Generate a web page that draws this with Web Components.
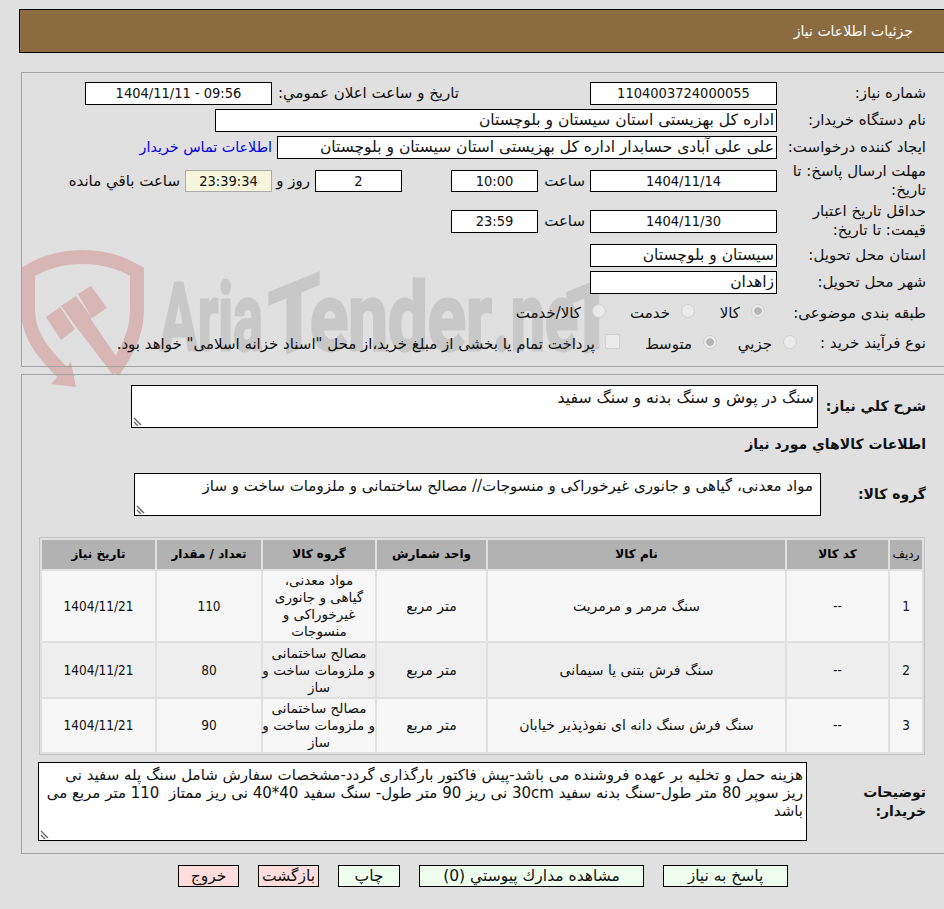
<!DOCTYPE html>
<html lang="fa" dir="rtl">
<head>
<meta charset="utf-8">
<title>جزئيات اطلاعات نياز</title>
<style>
  html{ background: #e0e0e0; }
  body{
    margin: 0;
    padding: 0;
    width: 944px;
    height: 909px;
    overflow: hidden;
    position: relative;
    font: 15px/18px "DejaVu Sans", sans-serif;
    color: #111;
  }
</style>
</head>
<body>

<water-mark></water-mark>

<page-header>جزئيات اطلاعات نياز</page-header>

<form-panel style="margin-top:19px;padding-top:9px;padding-bottom:11px;">
  <form-row>
    <field-label style="width:149px">شماره نیاز:</field-label>
    <field-box center style="width:187px">1104003724000055</field-box>
    <field-label style="width:187px;padding-right:131px">تاریخ و ساعت اعلان عمومي:</field-label>
    <field-box center style="width:187px;direction:ltr">1404/11/11 - 09:56</field-box>
  </form-row>
  <form-row>
    <field-label style="width:149px">نام دستگاه خریدار:</field-label>
    <field-box style="width:562px">اداره کل بهزیستی استان سیستان و بلوچستان</field-box>
  </form-row>
  <form-row>
    <field-label style="width:149px">ایجاد کننده درخواست:</field-label>
    <field-box style="width:500px">علی علی آبادی حسابدار اداره کل بهزیستی استان سیستان و بلوچستان</field-box>
    <field-label link style="padding-right:5px">اطلاعات تماس خریدار</field-label>
  </form-row>
  <form-row style="height:36px">
    <field-label style="width:144px;padding-left:5px">مهلت ارسال پاسخ: تا تاریخ:</field-label>
    <field-box center style="width:187px;height:22px">1404/11/14</field-box>
    <field-label style="width:47px;padding-right:5px">ساعت</field-label>
    <field-box center style="width:87px;height:22px">10:00</field-box>
    <field-box center style="width:87px;height:22px;margin-right:49px">2</field-box>
    <field-label style="width:38px;padding-right:5px">روز و</field-label>
    <field-box center timer style="width:87px;height:22px">23:39:34</field-box>
    <field-label style="padding-right:5px">ساعت باقي مانده</field-label>
  </form-row>
  <form-row style="height:36px">
    <field-label style="width:144px;padding-left:5px">حداقل تاریخ اعتبار قیمت: تا تاریخ:</field-label>
    <field-box center style="width:187px">1404/11/30</field-box>
    <field-label style="width:47px;padding-right:5px">ساعت</field-label>
    <field-box center style="width:87px">23:59</field-box>
  </form-row>
  <form-row style="margin-top:1px">
    <field-label style="width:149px">استان محل تحویل:</field-label>
    <field-box style="width:187px">سیستان و بلوچستان</field-box>
  </form-row>
  <form-row>
    <field-label style="width:149px">شهر محل تحویل:</field-label>
    <field-box style="width:187px">زاهدان</field-box>
  </form-row>
  <form-row style="height:30px">
    <field-label style="width:161px">طبقه بندی موضوعی:</field-label>
    <radio-opt checked style="width:70px">کالا</radio-opt>
    <radio-opt style="width:89px">خدمت</radio-opt>
    <radio-opt>کالا/خدمت</radio-opt>
  </form-row>
  <form-row style="height:22px">
    <field-label style="width:129px">نوع فرآیند خرید :</field-label>
    <radio-opt style="width:80px">جزيي</radio-opt>
    <radio-opt checked style="width:97px">متوسط</radio-opt>
    <radio-opt square>پرداخت تمام یا بخشی از مبلغ خرید،از محل "اسناد خزانه اسلامی" خواهد بود.</radio-opt>
  </form-row>
</form-panel>

<form-panel style="margin-top:7px;padding-top:10px;padding-bottom:12px;">
  <form-row style="height:43px">
    <field-label bold style="width:108px">شرح كلي نياز:</field-label>
    <note-box style="width:687px;height:43px;font-size:15.7px">سنگ در پوش و سنگ بدنه و سنگ سفید</note-box>
  </form-row>
  <form-row style="height:22px;margin-top:1px;margin-bottom:13px">
    <field-label bold>اطلاعات كالاهاي مورد نياز</field-label>
  </form-row>
  <form-row style="height:43px">
    <field-label bold style="width:105px">گروه كالا:</field-label>
    <note-box style="width:687px;height:43px;padding-right:7px">مواد معدنی، گیاهی و جانوری غیرخوراکی و منسوجات// مصالح ساختمانی و ملزومات ساخت و ساز</note-box>
  </form-row>
  <items-table style="margin-top:17px"></items-table>
  <form-row style="height:79px;margin-top:3px">
    <field-label bold style="width:99px;padding-left:20px">توضیحات خریدار:</field-label>
    <note-box style="width:769px;height:79px;padding-left:6px">هزینه حمل و تخلیه بر عهده فروشنده می باشد-پیش فاکتور بارگذاری گردد-مشخصات سفارش شامل سنگ پله سفید نی ریز سوپر 80 متر طول-سنگ بدنه سفید 30cm نی ریز 90 متر طول- سنگ سفید 40*40 نی ریز ممتاز  110 متر مربع می باشد</note-box>
  </form-row>
</form-panel>

<button-bar>
  <action-button style="width:125px">پاسخ به نیاز</action-button>
  <action-button style="width:225px">مشاهده مدارك پیوستي (0)</action-button>
  <action-button style="width:62px">چاپ</action-button>
  <action-button pink style="width:61px">بازگشت</action-button>
  <action-button pink style="width:61px">خروج</action-button>
</button-bar>

<script>
const waterMarkTemplate = document.createElement('template');
waterMarkTemplate.innerHTML = `
  <style>
    :host{
      position: absolute;
      left: 0;
      top: 0;
      z-index: -1;
      display: block;
      direction: ltr;
    }
    svg{ display: block; }
    text{
      font-family: Roboto, sans-serif;
      font-weight: 700;
      font-size: 94px;
      fill: #c8c8c8;
      stroke: #c8c8c8;
      stroke-width: 3px;
    }
  </style>
  <svg width="944" height="909" viewBox="0 0 944 909">
    <g fill="#d9b6b6">
      <path d="M70 380C50 360 28 340 28 310V272C60 252 105 252 137 272V310C137 335 125 355 113 372" fill="none" stroke="#d9b6b6" stroke-width="14"/>
      <polygon points="71,362 76,387 51,384"/>
      <polygon points="46,317 60,307 75,329 61,340"/>
      <polygon points="61,306 76,296 92,318 77,328"/>
      <polygon points="78,294 91,286 107,308 92,318"/>
      <polygon points="77,328 90,318 120,362 113,375"/>
    </g>
    <text x="160" y="350" textLength="103" lengthAdjust="spacingAndGlyphs">Aria</text>
    <text x="268" y="350" textLength="52" lengthAdjust="spacingAndGlyphs" transform="translate(294 350) skewY(-22) translate(-294 -350)">T</text>
    <text x="310" y="350" textLength="182" lengthAdjust="spacingAndGlyphs">ender</text>
    <text x="493" y="350" textLength="85" lengthAdjust="spacingAndGlyphs">.ne</text>
    <text x="566" y="350" textLength="52" lengthAdjust="spacingAndGlyphs" transform="translate(592 350) skewY(-22) translate(-592 -350)">T</text>
  </svg>
`;

class WaterMark extends HTMLElement{
    constructor(){
        super();
        this.attachShadow({mode: 'open'});
        this.shadowRoot.appendChild(waterMarkTemplate.content.cloneNode(true));
    }
}

const pageHeaderTemplate = document.createElement('template');
pageHeaderTemplate.innerHTML = `
  <style>
    :host{
      display: flex;
      align-items: center;
      box-sizing: border-box;
      height: 44px;
      margin: 9px 0 0 19px;
      padding-right: 31px;
      background: #8b6b3f;
      color: #fff;
      font-size: 14px;
      border: 1px solid #000;
      border-right: none;
    }
  </style>
  <slot></slot>
`;

class PageHeader extends HTMLElement{
    constructor(){
        super();
        this.attachShadow({mode: 'open'});
        this.shadowRoot.appendChild(pageHeaderTemplate.content.cloneNode(true));
    }
}

const formPanelTemplate = document.createElement('template');
formPanelTemplate.innerHTML = `
  <style>
    :host{
      display: flex;
      flex-direction: column;
      gap: 4px;
      margin-left: 21px;
      padding-right: 18px;
      border: 1px solid #a3a3a3;
      border-right: none;
    }
  </style>
  <slot></slot>
`;

class FormPanel extends HTMLElement{
    constructor(){
        super();
        this.attachShadow({mode: 'open'});
        this.shadowRoot.appendChild(formPanelTemplate.content.cloneNode(true));
    }
}

const formRowTemplate = document.createElement('template');
formRowTemplate.innerHTML = `
  <style>
    :host{
      display: flex;
      align-items: center;
      min-height: 23px;
    }
  </style>
  <slot></slot>
`;

class FormRow extends HTMLElement{
    constructor(){
        super();
        this.attachShadow({mode: 'open'});
        this.shadowRoot.appendChild(formRowTemplate.content.cloneNode(true));
    }
}

const fieldLabelTemplate = document.createElement('template');
fieldLabelTemplate.innerHTML = `
  <style>
    :host{
      display: block;
      flex: none;
      line-height: 19px;
      white-space: normal;
    }
    :host([bold]){
      font-weight: bold;
      font-size: 14px;
    }
    :host([link]){
      color: #0000ee;
      font-size: 14.3px;
    }
  </style>
  <slot></slot>
`;

class FieldLabel extends HTMLElement{
    constructor(){
        super();
        this.attachShadow({mode: 'open'});
        this.shadowRoot.appendChild(fieldLabelTemplate.content.cloneNode(true));
    }
}

const fieldBoxTemplate = document.createElement('template');
fieldBoxTemplate.innerHTML = `
  <style>
    :host{
      display: block;
      flex: none;
      box-sizing: border-box;
      height: 23px;
      padding: 1px 2px;
      font-size: 15.5px;
      line-height: 19px;
      background: #fff;
      border: 1px solid #000;
      white-space: nowrap;
    }
    :host([center]){
      text-align: center;
      font-family: "DejaVu Sans Condensed", "DejaVu Sans", sans-serif;
      font-stretch: condensed;
      font-size: 14.5px;
    }
    :host([timer]){
      background: #f5f5dc;
      border-color: #aaa;
    }
  </style>
  <slot></slot>
`;

class FieldBox extends HTMLElement{
    constructor(){
        super();
        this.attachShadow({mode: 'open'});
        this.shadowRoot.appendChild(fieldBoxTemplate.content.cloneNode(true));
    }
}

const radioOptTemplate = document.createElement('template');
radioOptTemplate.innerHTML = `
  <style>
    :host{
      display: flex;
      align-items: center;
      flex: none;
      gap: 11px;
      white-space: nowrap;
    }
    .mark{
      flex: none;
      box-sizing: border-box;
      width: 14px;
      height: 14px;
      margin-top: -4px;
      border-radius: 50%;
      border: 1px solid #d0d0d0;
      background: #eaeaea;
    }
    :host([checked]) .mark{
      background: radial-gradient(circle, #b5b5b5 0 3.5px, #eaeaea 4px);
    }
    :host([square]) .mark{
      width: 15px;
      height: 15px;
      border-radius: 2px;
    }
    :host([square]){
      gap: 10px;
    }
  </style>
  <span class="mark"></span>
  <span><slot></slot></span>
`;

class RadioOpt extends HTMLElement{
    constructor(){
        super();
        this.attachShadow({mode: 'open'});
        this.shadowRoot.appendChild(radioOptTemplate.content.cloneNode(true));
    }
}

const noteBoxTemplate = document.createElement('template');
noteBoxTemplate.innerHTML = `
  <style>
    :host{
      display: block;
      flex: none;
      position: relative;
      box-sizing: border-box;
      padding: 3px 3px 0 16px;
      font-size: 15px;
      background: #fff;
      border: 1px solid #000;
    }
    .text{
      white-space: pre-wrap;
      line-height: 18px;
    }
    svg{
      position: absolute;
      left: 1px;
      bottom: 1px;
    }
  </style>
  <div class="text"><slot></slot></div>
  <svg width="10" height="10" viewBox="0 0 10 10">
    <path d="M1 2L8 9M1 6L5 10" stroke="#666" stroke-width="1.4" fill="none"/>
  </svg>
`;

class NoteBox extends HTMLElement{
    constructor(){
        super();
        this.attachShadow({mode: 'open'});
        this.shadowRoot.appendChild(noteBoxTemplate.content.cloneNode(true));
    }
}

const itemsTableTemplate = document.createElement('template');
itemsTableTemplate.innerHTML = `
  <style>
    :host{
      display: block;
      margin-right: 1px;
      width: 886px;
    }
    table{
      box-sizing: border-box;
      width: 886px;
      table-layout: fixed;
      border-collapse: separate;
      border-spacing: 2px;
      border: 1px solid #c4c4c4;
    }
    th, td{
      padding: 0;
      text-align: center;
      font-size: 14px;
      line-height: 17px;
      white-space: pre;
    }
    th{
      height: 29px;
      background: #b2b2b2;
      font-size: 12px;
      color: #000;
    }
    th:first-child{
      font-weight: normal;
    }
    td.num{
      font-family: "DejaVu Sans Condensed", "DejaVu Sans", sans-serif;
      font-stretch: condensed;
      font-size: 13.5px;
    }
    td.group{
      font-size: 13.5px;
    }
    tbody tr:nth-child(odd) td{ background: #f7f7f7; }
    tbody tr:nth-child(even) td{ background: #eeeeee; }
    tbody tr:nth-child(1) td{ height: 70px; }
    tbody tr:nth-child(2) td{ height: 54px; }
    tbody tr:nth-child(3) td{ height: 53px; }
  </style>
  <table>
    <colgroup>
      <col style="width:32px"><col style="width:101px"><col style="width:297px"><col style="width:109px">
      <col style="width:112px"><col style="width:104px"><col>
    </colgroup>
    <thead>
      <tr><th>ردیف</th><th>کد کالا</th><th>نام کالا</th><th>واحد شمارش</th><th>گروه کالا</th><th>تعداد / مقدار</th><th>تاریخ نیاز</th></tr>
    </thead>
    <tbody></tbody>
  </table>
`;

const itemRows = [
    ['1', '--', 'سنگ مرمر و مرمریت', 'متر مربع', 'مواد معدنی،\nگیاهی و جانوری\nغیرخوراکی و\nمنسوجات', '110', '1404/11/21'],
    ['2', '--', 'سنگ فرش بتنی یا سیمانی', 'متر مربع', 'مصالح ساختمانی\nو ملزومات ساخت و\nساز', '80', '1404/11/21'],
    ['3', '--', 'سنگ فرش سنگ دانه ای نفوذپذیر خیابان', 'متر مربع', 'مصالح ساختمانی\nو ملزومات ساخت و\nساز', '90', '1404/11/21']
];
const numericCols = [0, 1, 5, 6];

class ItemsTable extends HTMLElement{
    constructor(){
        super();
        this.attachShadow({mode: 'open'});
        this.shadowRoot.appendChild(itemsTableTemplate.content.cloneNode(true));
        const body = this.shadowRoot.querySelector('tbody');
        itemRows.forEach(row => {
            const tr = document.createElement('tr');
            row.forEach((text, i) => {
                const td = document.createElement('td');
                td.textContent = text;
                if(numericCols.includes(i)) td.className = 'num';
                if(i === 4) td.className = 'group';
                tr.appendChild(td);
            });
            body.appendChild(tr);
        });
    }
}

const buttonBarTemplate = document.createElement('template');
buttonBarTemplate.innerHTML = `
  <style>
    :host{
      display: flex;
      gap: 19px;
      margin-top: 11px;
      padding-right: 156px;
    }
  </style>
  <slot></slot>
`;

class ButtonBar extends HTMLElement{
    constructor(){
        super();
        this.attachShadow({mode: 'open'});
        this.shadowRoot.appendChild(buttonBarTemplate.content.cloneNode(true));
    }
}

const actionButtonTemplate = document.createElement('template');
actionButtonTemplate.innerHTML = `
  <style>
    :host{
      display: block;
      flex: none;
      box-sizing: border-box;
      height: 22px;
      font-size: 15.5px;
      line-height: 21px;
      text-align: center;
      background: #eeffee;
      border: 1px solid #000;
      white-space: nowrap;
    }
    :host([pink]){
      background: #ffdddd;
    }
  </style>
  <slot></slot>
`;

class ActionButton extends HTMLElement{
    constructor(){
        super();
        this.attachShadow({mode: 'open'});
        this.shadowRoot.appendChild(actionButtonTemplate.content.cloneNode(true));
    }
}

window.customElements.define('water-mark', WaterMark);
window.customElements.define('page-header', PageHeader);
window.customElements.define('form-panel', FormPanel);
window.customElements.define('form-row', FormRow);
window.customElements.define('field-label', FieldLabel);
window.customElements.define('field-box', FieldBox);
window.customElements.define('radio-opt', RadioOpt);
window.customElements.define('note-box', NoteBox);
window.customElements.define('items-table', ItemsTable);
window.customElements.define('button-bar', ButtonBar);
window.customElements.define('action-button', ActionButton);
</script>
</body>
</html>
